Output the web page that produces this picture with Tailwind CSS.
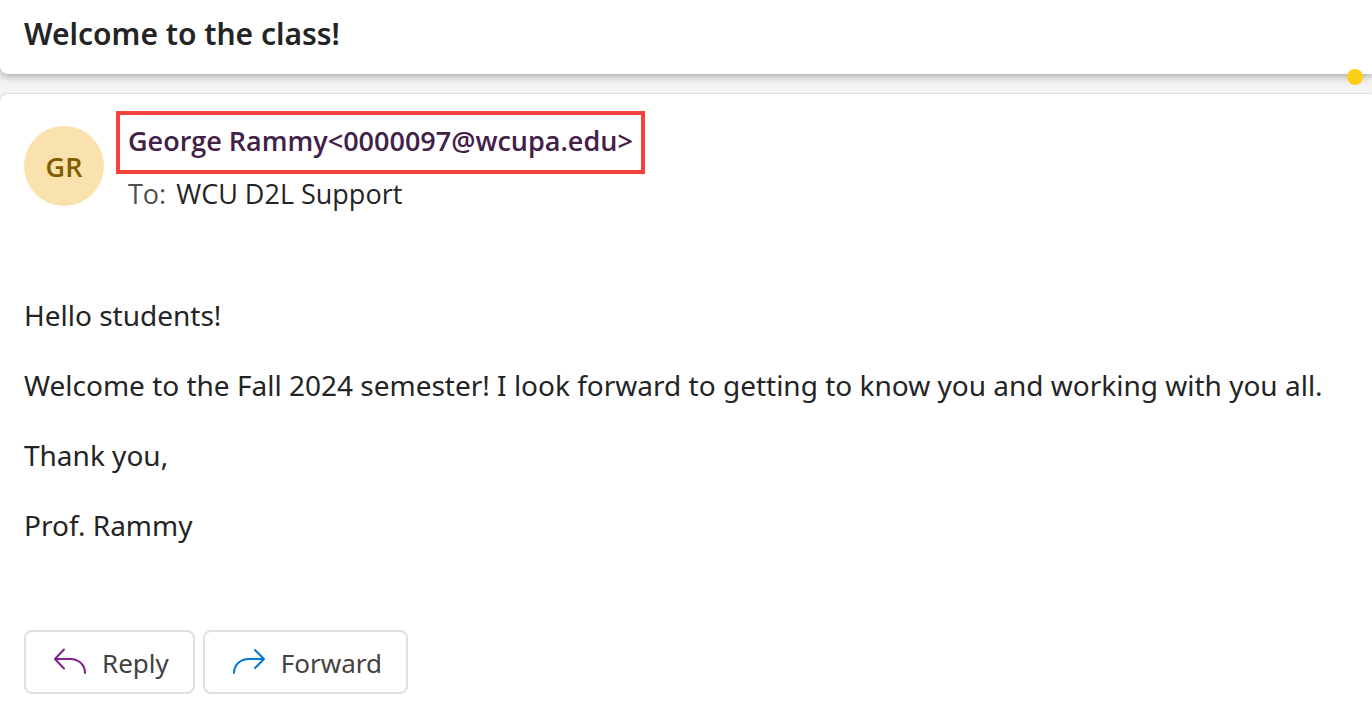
<!DOCTYPE html>
<html lang="en">
<head>
    <meta charset="UTF-8">
    <meta name="viewport" content="width=device-width, initial-scale=1.0">
    <title>Welcome to the class!</title>
    <script src="https://cdn.jsdelivr.net/npm/@tailwindcss/browser@4"></script>
</head>
<body class="bg-white font-['Noto_Sans','Open_Sans',sans-serif] text-[#242424]">
    <div class="bg-[#f4f4f4]">
        <header class="relative rounded-bl-lg bg-white px-6 pt-3 pb-[18px] shadow-[0_2px_8px_rgba(0,0,0,0.35)]">
            <h1 class="text-[30px] leading-11 font-semibold">Welcome to the class!</h1>
            <span class="absolute right-[9px] -bottom-[11px] size-4 rounded-full bg-[#fdd017]"></span>
        </header>
        <main class="relative mt-5 rounded-tl-lg bg-white px-6 pt-[17px] pb-3 shadow-[0_0_2px_rgba(0,0,0,0.25)]">
            <section class="flex items-start gap-3 font-['Open_Sans','Noto_Sans',sans-serif] text-[27px]">
                <div class="mt-[15px] flex size-20 shrink-0 items-center justify-center rounded-full bg-[#f9e2ae] pt-0.5 font-semibold text-[#835b00]">GR</div>
                <div>
                    <div class="border-4 border-[#f4433c] px-2 pt-2 pb-[11px] leading-9 font-semibold text-[#432048]">George Rammy&lt;0000097@wcupa.edu&gt;</div>
                    <p class="flex gap-2.5 px-3 leading-10"><span class="text-[#505050]">To:</span> <span>WCU D2L Support</span></p>
                </div>
            </section>
            <article class="mt-[81px] flex flex-col gap-[30px] text-[28px] leading-10">
                <p>Hello students!</p>
                <p>Welcome to the Fall 2024 semester! I look forward to getting to know you and working with you all.</p>
                <p>Thank you,</p>
                <p>Prof. Rammy</p>
            </article>
            <div class="mt-[85px] flex gap-2 text-[26px] text-[#424242]">
                <button type="button" class="flex h-16 items-center gap-4 rounded-lg border-2 border-[#e0e0e0] pt-0.5 pr-6 pl-7">
                    <svg class="size-8" viewBox="0 0 32 32" fill="none" stroke="#7f2386" stroke-width="2" stroke-linecap="round" stroke-linejoin="round">
                        <path d="M10 2.5L.9 12L10 21.5M1 12H16C25 12 31 18 31 26"></path>
                    </svg>
                    Reply
                </button>
                <button type="button" class="flex h-16 items-center gap-4 rounded-lg border-2 border-[#e0e0e0] pt-0.5 pr-6 pl-7">
                    <svg class="size-8" viewBox="0 0 32 32" fill="none" stroke="#0078d4" stroke-width="2" stroke-linecap="round" stroke-linejoin="round">
                        <path d="M22 3L31 12L22 21M31 12H16C7 12 1 18 1 26"></path>
                    </svg>
                    Forward
                </button>
            </div>
        </main>
    </div>
</body>
</html>
